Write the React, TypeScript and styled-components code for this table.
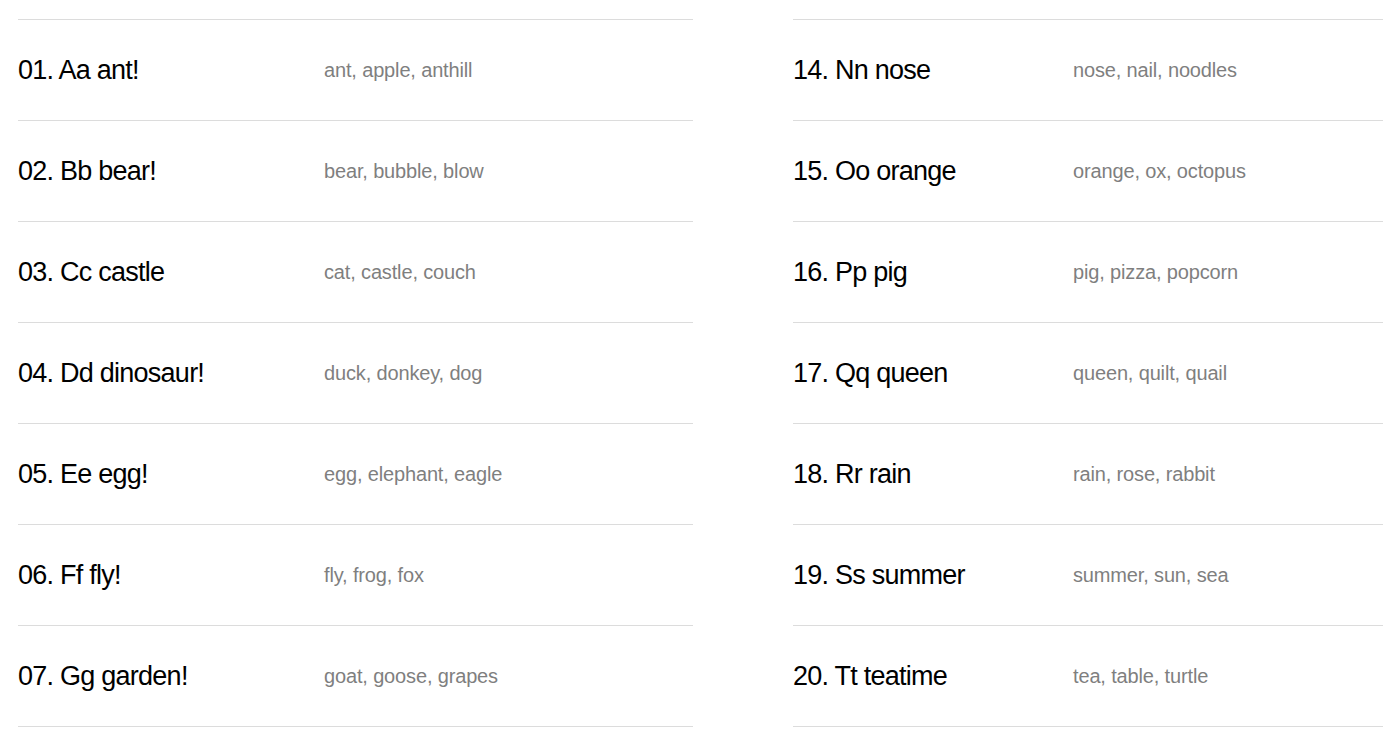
import React from "react";
import styled, { createGlobalStyle } from "styled-components";

const Global = createGlobalStyle`
  html, body { margin: 0; padding: 0; background: #fff; }
  body { font-family: "Liberation Sans", Arial, Helvetica, sans-serif; }
`;

const Page = styled.div`
  display: flex;
  gap: 100px;
  padding: 19px 0 0 18px;
`;

const Column = styled.ul<{ $fixed?: boolean }>`
  list-style: none;
  margin: 0;
  padding: 0;
  flex: ${(p) => (p.$fixed ? "0 0 675px" : "1 1 0")};
  min-width: 0;
  border-top: 1px solid #dcdcdc;
`;

const Row = styled.li<{ $titleWidth: number }>`
  display: grid;
  grid-template-columns: ${(p) => p.$titleWidth}px 1fr;
  align-items: center;
  height: 100px;
  border-bottom: 1px solid #dcdcdc;
`;

const Title = styled.span`
  font-size: 27px;
  letter-spacing: -0.75px;
  color: #000;
  white-space: nowrap;
`;

const Words = styled.span`
  font-size: 20px;
  letter-spacing: -0.15px;
  color: #7f7f7f;
  white-space: nowrap;
`;

const left = [
  ["01. Aa ant!", "ant, apple, anthill"],
  ["02. Bb bear!", "bear, bubble, blow"],
  ["03. Cc castle", "cat, castle, couch"],
  ["04. Dd dinosaur!", "duck, donkey, dog"],
  ["05. Ee egg!", "egg, elephant, eagle"],
  ["06. Ff fly!", "fly, frog, fox"],
  ["07. Gg garden!", "goat, goose, grapes"],
];

const right = [
  ["14. Nn nose", "nose, nail, noodles"],
  ["15. Oo orange", "orange, ox, octopus"],
  ["16. Pp pig", "pig, pizza, popcorn"],
  ["17. Qq queen", "queen, quilt, quail"],
  ["18. Rr rain", "rain, rose, rabbit"],
  ["19. Ss summer", "summer, sun, sea"],
  ["20. Tt teatime", "tea, table, turtle"],
];

export default function App() {
  return (
    <>
      <Global />
      <Page>
        <Column $fixed>
          {left.map(([t, w]) => (
            <Row key={t} $titleWidth={306}>
              <Title>{t}</Title>
              <Words>{w}</Words>
            </Row>
          ))}
        </Column>
        <Column>
          {right.map(([t, w]) => (
            <Row key={t} $titleWidth={280}>
              <Title>{t}</Title>
              <Words>{w}</Words>
            </Row>
          ))}
        </Column>
      </Page>
    </>
  );
}
